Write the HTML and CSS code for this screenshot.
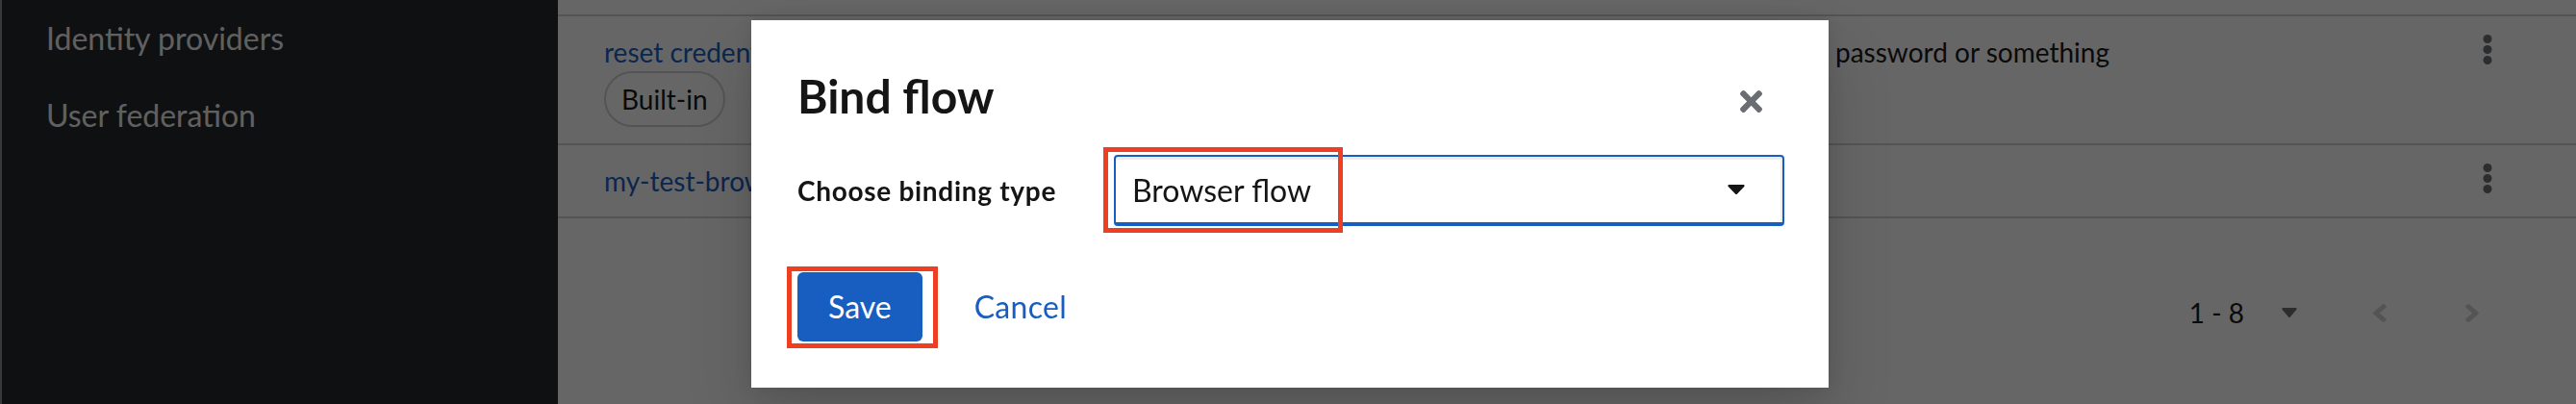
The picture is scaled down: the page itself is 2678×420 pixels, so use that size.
FILE: index.html
```html
<!DOCTYPE html>
<html lang="en">
<head>
<meta charset="utf-8">
<title>Bind flow</title>
<link rel="stylesheet" href="styles.css">
</head>
<body>
<div class="page">
  <nav class="sidebar">
    <a class="nav-item" href="#">Identity providers</a>
    <a class="nav-item" href="#">User federation</a>
  </nav>
  <main class="main">
    <div class="table-top"></div>
    <div class="row">
      <div class="cell-name">
        <a class="link" href="#">reset credentials</a>
        <div class="tags"><span class="label">Built-in</span></div>
      </div>
      <div class="cell-used"></div>
      <div class="cell-desc">password or something</div>
      <div class="cell-actions">
        <svg class="kebab" viewBox="0 0 10 31" width="10" height="31"><circle cx="5" cy="4.5" r="4.5"/><circle cx="5" cy="15.5" r="4.5"/><circle cx="5" cy="26.5" r="4.5"/></svg>
      </div>
    </div>
    <div class="row row-last">
      <div class="cell-name">
        <a class="link" href="#">my-test-browser</a>
      </div>
      <div class="cell-used"></div>
      <div class="cell-desc"></div>
      <div class="cell-actions">
        <svg class="kebab" viewBox="0 0 10 31" width="10" height="31"><circle cx="5" cy="4.5" r="4.5"/><circle cx="5" cy="15.5" r="4.5"/><circle cx="5" cy="26.5" r="4.5"/></svg>
      </div>
    </div>
    <div class="pagination">
      <div class="toggle">
        <span>1 - 8</span>
        <svg class="toggle-caret" viewBox="4 192 312 168" width="16" height="10" preserveAspectRatio="none"><path d="M31.3 192h257.3c17.8 0 26.7 21.5 14.1 34.1L174.1 354.8c-7.8 7.8-20.5 7.8-28.3 0L17.2 226.1C4.6 213.5 13.5 192 31.3 192z"/></svg>
      </div>
      <div class="nav-btn">
        <svg class="chev" viewBox="24 96 208 320" width="14" height="19" preserveAspectRatio="none"><path d="M31.7 239l136-136c9.4-9.4 24.6-9.4 33.9 0l22.6 22.6c9.4 9.4 9.4 24.6 0 33.9L127.9 256l96.4 96.4c9.4 9.4 9.4 24.6 0 33.9L201.7 409c-9.4 9.4-24.6 9.4-33.9 0l-136-136c-9.5-9.4-9.5-24.6-.1-34z"/></svg>
      </div>
      <div class="nav-btn">
        <svg class="chev" viewBox="24 96 208 320" width="14" height="19" preserveAspectRatio="none"><path d="M224.3 273l-136 136c-9.4 9.4-24.6 9.4-33.9 0l-22.6-22.6c-9.4-9.4-9.4-24.6 0-33.9l96.4-96.4-96.4-96.4c-9.4-9.4-9.4-24.6 0-33.9L54.3 103c9.4-9.4 24.6-9.4 33.9 0l136 136c9.5 9.4 9.5 24.6.1 34z"/></svg>
      </div>
    </div>
  </main>
</div>

<div class="backdrop">
  <div class="modal" role="dialog">
    <div class="modal-header">
      <h1 class="modal-title">Bind flow</h1>
      <svg class="close" viewBox="0 80 352 352" width="23" height="23"><path d="M242.72 256l100.07-100.07c12.28-12.28 12.28-32.19 0-44.48l-22.24-22.24c-12.28-12.28-32.19-12.28-44.48 0L176 189.28 75.930 89.21c-12.28-12.28-32.19-12.28-44.48 0L9.21 111.45c-12.28 12.28-12.28 32.19 0 44.48L109.28 256 9.21 356.07c-12.28 12.28-12.28 32.19 0 44.48l22.24 22.240c12.28 12.28 32.2 12.28 44.48 0L176 322.72l100.07 100.07c12.28 12.28 32.2 12.28 44.48 0l22.24-22.24c12.28-12.28 12.28-32.19 0-44.48L242.72 256z"/></svg>
    </div>
    <div class="form-row">
      <label class="form-label">Choose binding type</label>
      <div class="select-wrap">
        <div class="select">
          <span class="select-text">Browser flow</span>
          <svg class="select-caret" viewBox="4 192 312 168" width="18" height="10" preserveAspectRatio="none"><path d="M31.3 192h257.3c17.8 0 26.7 21.5 14.1 34.1L174.1 354.8c-7.8 7.8-20.5 7.8-28.3 0L17.2 226.1C4.6 213.5 13.5 192 31.3 192z"/></svg>
        </div>
        <div class="annot annot-select"></div>
      </div>
    </div>
    <div class="modal-footer">
      <div class="btn-wrap">
        <button class="btn-primary">Save</button>
        <div class="annot annot-save"></div>
      </div>
      <button class="btn-link">Cancel</button>
    </div>
  </div>
</div>
</body>
</html>
```
FILE: styles.css
```css
html, body {
  margin: 0;
  padding: 0;
}
body {
  width: 2678px;
  height: 420px;
  overflow: hidden;
  font-family: Lato, "Open Sans", sans-serif;
  background: #ffffff;
  color: #151515;
}
.page {
  display: flex;
  height: 420px;
}
.sidebar {
  width: 580px;
  flex: none;
  box-sizing: border-box;
  background: #212427;
  border-left: 2px solid #8a8d90;
  padding-left: 46px;
}
.nav-item {
  display: block;
  height: 80px;
  line-height: 80px;
  font-size: 32px;
  color: #f0f0f0;
  text-decoration: none;
}
.main {
  flex: 1;
  background: #ffffff;
  display: flex;
  flex-direction: column;
}
.table-top {
  height: 15px;
}
.row {
  display: grid;
  grid-template-columns: 200px 1080px 1fr 80px;
  border-top: 2px solid #d2d2d2;
  padding: 17px 52px 17px 48px;
}
.row-last {
  border-bottom: 2px solid #d2d2d2;
}
.cell-name {
  font-size: 28px;
  line-height: 40px;
  white-space: nowrap;
}
.link {
  color: #185ec0;
  text-decoration: none;
}
.tags {
  display: flex;
}
.label {
  display: inline-block;
  border: 2px solid #d2d2d2;
  border-radius: 999px;
  padding: 8px 16px;
  line-height: 38px;
  font-size: 28px;
  color: #151515;
}
.cell-desc {
  font-size: 28px;
  line-height: 40px;
  color: #151515;
  white-space: nowrap;
}
.cell-actions {
  display: flex;
  justify-content: center;
  align-items: flex-start;
  padding-top: 2px;
}
.kebab {
  fill: #6a6e73;
}
.pagination {
  display: flex;
  justify-content: flex-end;
  align-items: center;
  height: 72px;
  margin-top: 62px;
  padding-right: 60px;
}
.toggle {
  display: flex;
  align-items: center;
  font-size: 28px;
  color: #151515;
  padding-right: 38px;
}
.toggle-caret {
  margin-left: 39px;
  fill: #6a6e73;
}
.nav-btn {
  width: 96px;
  display: flex;
  justify-content: center;
}
.chev {
  fill: #d2d2d2;
}

/* modal */
.backdrop {
  position: fixed;
  inset: 0;
  box-sizing: border-box;
  padding: 4px 0 0 4px;
  background: rgba(3, 3, 3, 0.607);
  display: flex;
  align-items: center;
  justify-content: center;
}
.modal {
  width: 1120px;
  box-sizing: border-box;
  background: #ffffff;
  padding: 48px;
  box-shadow: 0 32px 64px rgba(3, 3, 3, 0.16), 0 0 16px rgba(3, 3, 3, 0.1);
}
.modal-header {
  display: flex;
  align-items: center;
}
.modal-title {
  flex: 1;
  margin: 0;
  font-size: 48px;
  line-height: 62px;
  font-weight: 700;
  color: #151515;
}
.close {
  fill: #6a6e73;
  margin-right: 21px;
  margin-top: 10px;
}
.form-row {
  display: grid;
  grid-template-columns: 297px 1fr;
  column-gap: 32px;
  align-items: center;
  margin-top: 30px;
}
.form-label {
  font-size: 28px;
  font-weight: 700;
  letter-spacing: 0.7px;
  color: #151515;
}
.select-wrap {
  position: relative;
  margin-right: -2px;
}
.select {
  height: 74px;
  box-sizing: border-box;
  border: 2px solid #185ec0;
  border-bottom-width: 4px;
  border-radius: 4px;
  box-shadow: inset 0 3px 0 #ececec, inset -2px 0 0 #ececec;
  display: flex;
  align-items: center;
  padding: 0 39px 0 17px;
  font-size: 32px;
  color: #151515;
}
.select-text {
  flex: 1;
}
.select-caret {
  fill: #151515;
}
.annot {
  position: absolute;
  box-sizing: border-box;
  border: 5px solid #ee3f22;
  pointer-events: none;
}
.annot-select {
  left: -11px;
  top: -8px;
  width: 249px;
  height: 89px;
}
.modal-footer {
  display: flex;
  align-items: center;
  margin-top: 48px;
}
.btn-wrap {
  position: relative;
}
.btn-primary {
  display: block;
  font-family: inherit;
  font-size: 32px;
  line-height: 48px;
  padding: 12px 32px;
  background: #185ec0;
  color: #ffffff;
  border: 0;
  border-radius: 6px;
}
.annot-save {
  left: -11px;
  top: -6px;
  width: 157px;
  height: 85px;
}
.btn-link {
  font-family: inherit;
  font-size: 32px;
  line-height: 48px;
  padding: 12px 32px;
  margin-left: 22px;
  letter-spacing: 0.3px;
  color: #185ec0;
  background: none;
  border: 0;
}
```
